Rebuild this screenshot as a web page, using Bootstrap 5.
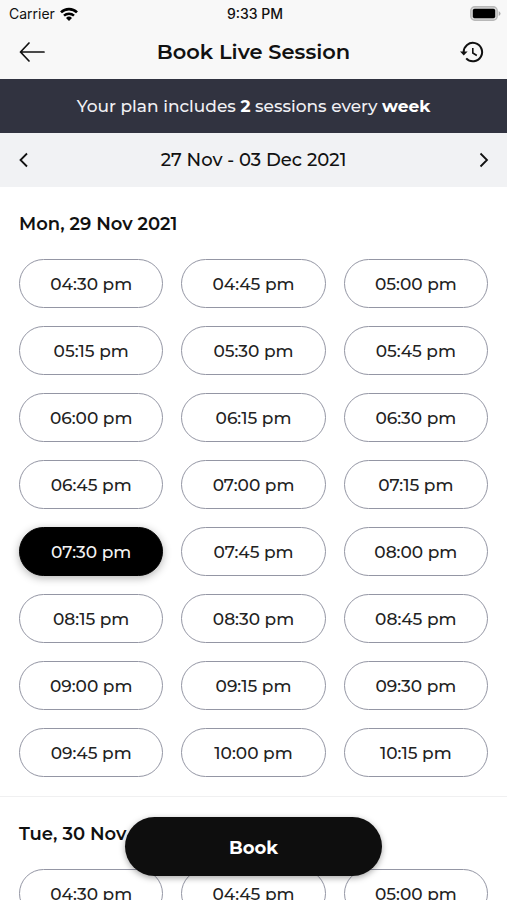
<!DOCTYPE html>
<html lang="en">
<head>
<meta charset="utf-8">
<meta name="viewport" content="width=device-width, initial-scale=1">
<title>Book Live Session</title>
<link href="https://cdn.jsdelivr.net/npm/bootstrap@5.3.0/dist/css/bootstrap.min.css" rel="stylesheet">
<style>
  body { font-family: Montserrat, Inter, sans-serif; font-size: 17px; line-height: 24px; font-weight: 500; color: #111; }
  .top-area { background: #f8f8f8; }
  .status-bar { font-family: Inter, Roboto, sans-serif; font-size: 14px; line-height: 20px; font-weight: 400; padding: 3px 6px 0 9px; height: 24px; }
  .bar-grid { display: grid; grid-template-columns: 1fr auto 1fr; align-items: center; }
  .title-bar { height: 55px; padding: 0 19px; }
  .title-bar h1 { font-size: 21px; line-height: 28px; font-weight: 600; }
  .icon-btn { color: #111; line-height: 0; }
  .icon-btn svg, .status-bar svg { display: block; }
  .plan-note { background: #313340; color: #f0f0f4; padding: 15px 16px; }
  .plan-note strong { color: #fff; font-weight: 700; }
  .week-bar { background: #f1f2f4; padding: 15px 16px; }
  .week-label { font-size: 18px; }
  .day-list { scrollbar-width: none; }
  .day-list::-webkit-scrollbar { display: none; }
  .day { padding: 25px 19px 19px; border-bottom: 1px solid #f0f0f1; }
  .day h2 { font-size: 18px; line-height: 24px; font-weight: 600; margin-bottom: 23px; }
  .slots { display: grid; grid-template-columns: repeat(3, 1fr); gap: 18px; }
  .slot { height: 49px; padding: 0; font-size: 17px; line-height: 24px; font-weight: 500; color: #222; background: #fff; border: 1px solid #9496a4; }
  .slot.active { background: #000; border-color: #000; color: #f4f4f4; box-shadow: 0 2px 8px rgba(0, 0, 0, .3); }
  .book-wrap { bottom: 24px; pointer-events: none; }
  .book-btn { width: 257px; height: 59px; background: #0e0e0e; color: #fff; font-size: 18px; line-height: 24px; padding: 2px 0 0; font-weight: 700; box-shadow: 0 2px 6px rgba(0, 0, 0, .35); pointer-events: auto; }
  .book-btn:hover { background: #222; color: #fff; }
</style>
</head>
<body>
<div class="vh-100 d-flex flex-column position-relative overflow-hidden bg-white">
  <header class="top-area flex-shrink-0">
    <div class="status-bar bar-grid">
      <div class="d-flex align-items-center gap-1">
        <span>Carrier</span>
        <svg width="20" height="16" viewBox="0 0 20 16" fill="none" stroke="#000" aria-label="Wi-Fi" role="img">
          <path d="M2 6.400a11.500 11.500 0 0 1 16 0" stroke-width="2.700"/>
          <path d="M5 9.700a7.200 7.200 0 0 1 10 0" stroke-width="2.400"/>
          <path d="M10 15 7 12a4.300 4.300 0 0 1 6 0Z" fill="#000" stroke="none"/>
        </svg>
      </div>
      <span class="fw-medium">9:33 PM</span>
      <svg class="ms-auto" width="31" height="15" viewBox="0 0 31 15" role="img" aria-label="Battery full">
        <rect x=".8" y=".8" width="26.400" height="13.400" rx="4" fill="#d8d8d8" stroke="#b8b8b8" stroke-width="1.400"/>
        <rect x="2.800" y="2.800" width="22.400" height="9.400" rx="1.800" fill="#000"/>
        <path d="M28.700 5v5q1.800-1 1.800-2.500T28.700 5Z" fill="#aaa"/>
      </svg>
    </div>
    <div class="title-bar bar-grid">
      <button type="button" class="btn border-0 p-0 icon-btn me-auto" aria-label="Back">
        <svg width="26" height="20" viewBox="0 0 26 20" fill="none" stroke="currentColor" stroke-width="1.700" stroke-linecap="round" stroke-linejoin="round"><path d="M25 10H1.500M10 1 1.500 10 10 19"/></svg>
      </button>
      <h1 class="m-0">Book Live Session</h1>
      <button type="button" class="btn border-0 p-0 icon-btn ms-auto me-1" aria-label="Session history">
        <svg width="24" height="24" viewBox="0 0 24 24" fill="none" stroke="currentColor" stroke-width="2"><path d="M3.700 12.500A9.200 9.200 0 1 1 6.200 18.400"/><path d="M12.800 8v5l4 2.500" stroke-width="1.600"/><path d="M0 11.500h7.600l-3.800 4Z" fill="currentColor" stroke="none"/></svg>
      </button>
    </div>
  </header>
  <div class="plan-note text-center flex-shrink-0">Your plan includes <strong>2</strong> sessions every <strong>week</strong></div>
  <nav class="week-bar d-flex align-items-center justify-content-between flex-shrink-0" aria-label="Week">
    <button type="button" class="btn border-0 p-0 icon-btn" aria-label="Previous week">
      <svg width="15" height="16" viewBox="0 0 15 16" fill="none" stroke="currentColor" stroke-width="1.800"><path d="M11 1.500 4.500 8l6.500 6.500"/></svg>
    </button>
    <span class="week-label">27 Nov - 03 Dec 2021</span>
    <button type="button" class="btn border-0 p-0 icon-btn" aria-label="Next week">
      <svg width="15" height="16" viewBox="0 0 15 16" fill="none" stroke="currentColor" stroke-width="1.800"><path d="M4.500 1.500 11 8l-6.500 6.500"/></svg>
    </button>
  </nav>
  <main class="day-list flex-grow-1 overflow-auto">
    <section class="day">
      <h2>Mon, 29 Nov 2021</h2>
      <div class="slots">
        <button type="button" class="btn rounded-pill slot">04:30 pm</button>
        <button type="button" class="btn rounded-pill slot">04:45 pm</button>
        <button type="button" class="btn rounded-pill slot">05:00 pm</button>
        <button type="button" class="btn rounded-pill slot">05:15 pm</button>
        <button type="button" class="btn rounded-pill slot">05:30 pm</button>
        <button type="button" class="btn rounded-pill slot">05:45 pm</button>
        <button type="button" class="btn rounded-pill slot">06:00 pm</button>
        <button type="button" class="btn rounded-pill slot">06:15 pm</button>
        <button type="button" class="btn rounded-pill slot">06:30 pm</button>
        <button type="button" class="btn rounded-pill slot">06:45 pm</button>
        <button type="button" class="btn rounded-pill slot">07:00 pm</button>
        <button type="button" class="btn rounded-pill slot">07:15 pm</button>
        <button type="button" class="btn rounded-pill slot active" aria-pressed="true">07:30 pm</button>
        <button type="button" class="btn rounded-pill slot">07:45 pm</button>
        <button type="button" class="btn rounded-pill slot">08:00 pm</button>
        <button type="button" class="btn rounded-pill slot">08:15 pm</button>
        <button type="button" class="btn rounded-pill slot">08:30 pm</button>
        <button type="button" class="btn rounded-pill slot">08:45 pm</button>
        <button type="button" class="btn rounded-pill slot">09:00 pm</button>
        <button type="button" class="btn rounded-pill slot">09:15 pm</button>
        <button type="button" class="btn rounded-pill slot">09:30 pm</button>
        <button type="button" class="btn rounded-pill slot">09:45 pm</button>
        <button type="button" class="btn rounded-pill slot">10:00 pm</button>
        <button type="button" class="btn rounded-pill slot">10:15 pm</button>
      </div>
    </section>
    <section class="day">
      <h2>Tue, 30 Nov 2021</h2>
      <div class="slots">
        <button type="button" class="btn rounded-pill slot">04:30 pm</button>
        <button type="button" class="btn rounded-pill slot">04:45 pm</button>
        <button type="button" class="btn rounded-pill slot">05:00 pm</button>
      </div>
    </section>
  </main>
  <div class="book-wrap position-absolute start-0 end-0 d-flex justify-content-center">
    <button type="button" class="btn border-0 rounded-pill book-btn">Book</button>
  </div>
</div>
<script src="https://cdn.jsdelivr.net/npm/bootstrap@5.3.0/dist/js/bootstrap.bundle.min.js"></script>
</body>
</html>
